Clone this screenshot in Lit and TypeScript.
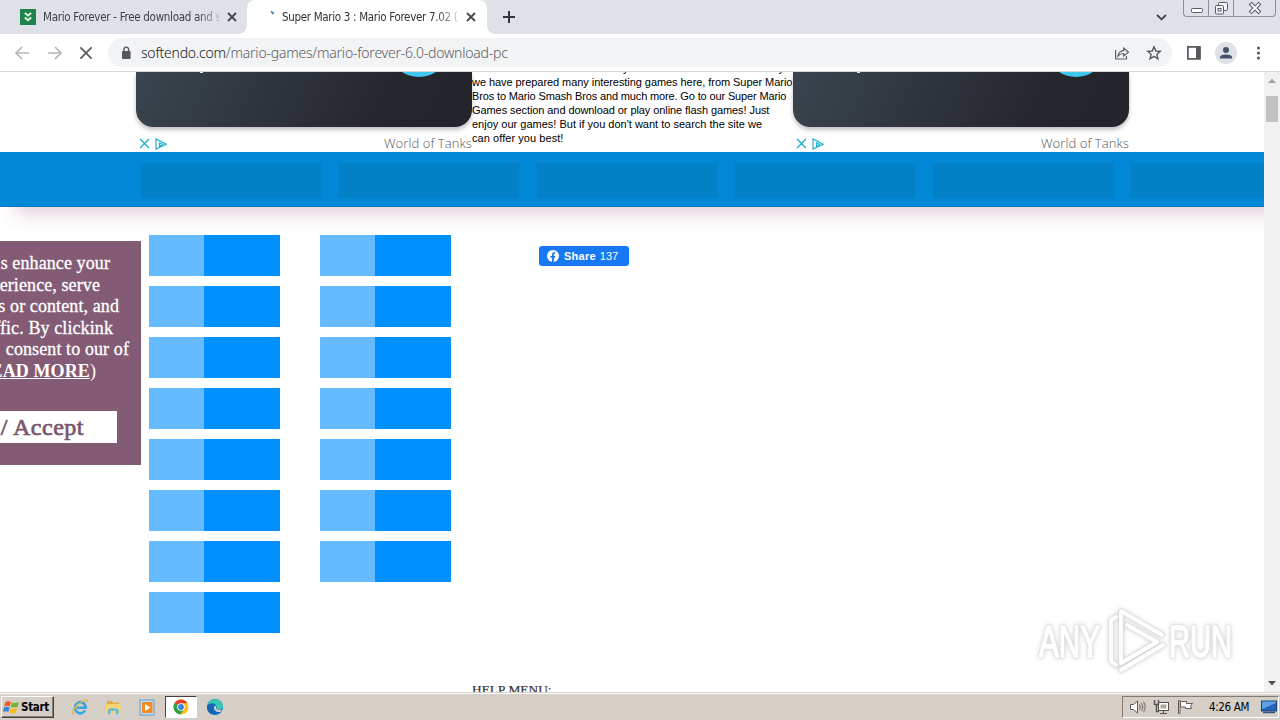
import { LitElement, html, css, svg } from "lit";
import { customElement, property } from "lit/decorators.js";

const closeIcon = (size: number, width: number, color: string) => html`
  <svg width=${size} height=${size} viewBox="0 0 10 10" fill="none" stroke=${color} stroke-width=${width}>
    <path d="M1 1L9 9M9 1L1 9" />
  </svg>`;

@customElement("browser-tabs")
class BrowserTabs extends LitElement {
  static styles = css`
    :host { display: flex; height: 34px; background: #dee1e8; position: relative; font: 11.5px "DejaVu Sans Condensed", "DejaVu Sans", sans-serif; font-stretch: condensed; color: #3c4043; }
    svg { display: block; flex: none; }
    .tab { box-sizing: border-box; height: 34px; display: flex; align-items: center; }
    .first { width: 247px; padding-left: 20px; border-radius: 0 0 8px 0; }
    .active { width: 240px; padding-left: 20px; background: #fff; border-radius: 8px 8px 0 0; position: relative; color: #303236; }
    .active::before, .active::after { content: ""; position: absolute; bottom: 0; width: 8px; height: 8px; }
    .active::before { left: -8px; background: radial-gradient(circle at 0 0, transparent 7.5px, #fff 8px); }
    .active::after { right: -8px; background: radial-gradient(circle at 100% 0, transparent 7.5px, #fff 8px); }
    .title { width: 176px; overflow: hidden; white-space: nowrap; -webkit-mask-image: linear-gradient(90deg, #000 154px, transparent 182px); }
    .t1 { margin-left: 7px; margin-right: 8px; letter-spacing: -0.29px; }
    .t2 { margin-left: 5px; margin-right: 8px; letter-spacing: -0.32px; }
    .plus { margin: 11px 0 0 16px; }
    .chevron { margin: 14px 0 0 auto; }
    .win { display: flex; box-sizing: border-box; width: 93px; height: 17px; margin: 0 4px 0 16px; border: 1px solid #8b9099; border-top: 0; border-radius: 0 0 4px 4px; overflow: hidden; }
    .b { box-sizing: border-box; width: 25px; display: flex; justify-content: center; border-right: 1px solid #8b9099; }
    .c { flex: 1; border: 0; }
  `;
  render() {
    return html`
      <div class="tab first">
        <svg width="16" height="16"><rect width="16" height="16" fill="#1e8449" /><path d="M4.8 4L8 6.6L11.2 4M4.8 8.5L8 11.3L11.2 8.5" fill="none" stroke="#e4f5e9" stroke-width="1.9" /></svg>
        <div class="title t1">Mario Forever - Free download and s</div>
        ${closeIcon(10, 1.8, "#44474b")}
      </div>
      <div class="tab active">
        <svg width="10" height="16"><path d="M4 2.5L6.8 4.8" stroke="#4a7bd0" stroke-width="1.8" /></svg>
        <div class="title t2">Super Mario 3 : Mario Forever 7.02 (</div>
        ${closeIcon(10, 1.8, "#44474b")}
      </div>
      <svg class="plus" width="12" height="12"><path d="M6 0V12M0 6H12" stroke="#33363a" stroke-width="2" /></svg>
      <svg class="chevron" width="11" height="7"><path d="M1 1L5.5 5.3L10 1" fill="none" stroke="#3c4043" stroke-width="1.8" /></svg>
      <div class="win">
        <div class="b"><svg width="25" height="16"><rect x="7.5" y="8.5" width="11" height="4" rx="1" fill="#fff" stroke="#555a63" /></svg></div>
        <div class="b"><svg width="25" height="16" fill="#f4f5f8" stroke="#555a63"><rect x="9.5" y="2.5" width="9" height="8" rx="1" /><rect x="6.5" y="5.5" width="8" height="8.5" rx="1" /><rect x="9" y="8.5" width="3" height="2.5" /></svg></div>
        <div class="b c"><svg width="14" height="16" fill="none"><path d="M3.5 4.5L10.5 11.5M10.5 4.5L3.5 11.5" stroke="#555a63" stroke-width="4" stroke-linecap="square" /><path d="M3.5 4.5L10.5 11.5M10.5 4.5L3.5 11.5" stroke="#fafbfc" stroke-width="2" stroke-linecap="square" /></svg></div>
      </div>`;
  }
}

@customElement("browser-toolbar")
class BrowserToolbar extends LitElement {
  static styles = css`
    :host { display: flex; align-items: center; box-sizing: border-box; height: 38px; padding-left: 14px; background: #fff; border-bottom: 1px solid #d5d6d9; }
    svg { display: block; flex: none; }
    .back { margin-right: 17px; }
    .fwd { margin-right: 16px; }
    .bar { box-sizing: border-box; display: flex; align-items: center; width: 1064px; height: 29px; margin-left: 15px; padding: 0 10px 0 13px; border-radius: 15px; background: #f1f3f4; }
    .url { margin-left: 10px; white-space: nowrap; font: 14px "Noto Sans", sans-serif; font-weight: 300; letter-spacing: -.22px; color: #5c6064; }
    .host { color: #202124; }
    .share { margin-left: auto; }
    .star { margin-left: 16px; }
    .panel { margin-left: 15px; }
    .who { margin-left: 14px; }
    .dots { margin-left: 19px; }
  `;
  render() {
    return html`
      <svg class="back" width="16" height="16" fill="none" stroke="#b4b6b8" stroke-width="1.7"><path d="M15 8H2.5M8 2L2 8L8 14" /></svg>
      <svg class="fwd" width="16" height="16" fill="none" stroke="#b4b6b8" stroke-width="1.7"><path d="M1 8H13.5M8 2L14 8L8 14" /></svg>
      ${closeIcon(14, 1.3, "#5a5d61")}
      <div class="bar">
        <svg width="10" height="14"><rect x="1" y="5" width="8.6" height="8" rx="1" fill="#55585c" /><path d="M3 6V3.4A2.3 2.3 0 0 1 7.6 3.4V6" fill="none" stroke="#55585c" stroke-width="1.4" /></svg>
        <div class="url"><span class="host">softendo.com</span>/mario-games/mario-forever-6.0-download-pc</div>
        <svg class="share" width="16" height="16" fill="none" stroke="#5f6368" stroke-width="1.2"><path d="M1.6 5V14H12.5V11" /><path d="M4 11C4.5 7.5 6.5 5.8 9.7 5.6V3L14.5 7.2L9.7 11V8.5C7.4 8.5 5.6 9.2 4 11Z" /></svg>
        <svg class="star" width="16" height="16" fill="none" stroke="#55595e" stroke-width="1.4"><path d="M8 1.8L9.8 6L14.3 6.4L10.9 9.3L11.9 13.8L8 11.4L4.1 13.8L5.1 9.3L1.7 6.4L6.2 6Z" /></svg>
      </div>
      <svg class="panel" width="14" height="14"><rect x=".9" y=".9" width="12" height="12" fill="none" stroke="#55585c" stroke-width="1.7" /><rect x="9" y="1" width="4.5" height="12" fill="#55585c" /></svg>
      <svg class="who" width="22" height="22"><circle cx="11" cy="11" r="11" fill="#dee1e6" /><circle cx="11" cy="8" r="3" fill="#47536c" /><path d="M5 16.5V15C5 11.6 17 11.6 17 15V16.5Z" fill="#47536c" /></svg>
      <svg class="dots" width="5" height="14" fill="#505357"><circle cx="2.5" cy="2" r="1.5" /><circle cx="2.5" cy="7" r="1.5" /><circle cx="2.5" cy="12" r="1.5" /></svg>`;
  }
}

@customElement("tank-ad")
class TankAd extends LitElement {
  static styles = css`
    :host { display: block; width: 336px; flex: none; }
    .card { height: 55px; border-radius: 0 0 17px 17px; overflow: hidden; background: linear-gradient(115deg, #3a454f 0%, #2f343c 40%, #26272e 72%, #24252c 100%); }
    .wrap { border-radius: 0 0 17px 17px; box-shadow: 0 3px 4px #55405055; }
    .card svg { display: block; }
    .foot { display: flex; align-items: center; height: 25px; padding: 4px 0 0 3px; box-sizing: border-box; margin-top: 2px; }
    .name { margin: -2px 0 0 auto; font: 300 13px "Open Sans", "Noto Sans", sans-serif; letter-spacing: .08px; color: #555; white-space: nowrap; }
    .play { margin-left: 5px; }
  `;
  render() {
    return html`
      <div class="wrap"><div class="card"><svg width="336" height="20"><rect x="64" width="3" height="1" fill="#eee" /><ellipse cx="283" cy="-14" rx="25" ry="19" fill="#3fc8ec" /></svg></div></div>
      <div class="foot">
        ${closeIcon(11, 1.3, "#22b2cc")}
        <svg class="play" width="12" height="12" fill="none" stroke="#22b2cc" stroke-width="1.2"><path d="M1 .9V11.1L11 6.2Z" /><path d="M4.5 5V8.5L7.5 6.4Z" /></svg>
        <span class="name">World of Tanks</span>
      </div>`;
  }
}

const COOKIE_LINES: [string, number][] = [
  ["s enhance your", 110],
  ["erience, serve", 100],
  ["s or content, and", 119],
  ["ffic. By clickink", 113],
  ["consent to our of", 129],
];

@customElement("web-page")
class WebPage extends LitElement {
  static styles = css`
    :host { display: flex; height: 620px; overflow: hidden; position: relative; background: #fff; }
    .main { width: 1264px; height: 620px; overflow: hidden; position: relative; }
    .top { display: flex; height: 80px; padding-left: 136px; overflow: hidden; }
    .intro { width: 321px; flex: none; font: 11px/14px "Liberation Sans", Arial, sans-serif; color: #000; white-space: nowrap; margin-top: -11px; }
    .tail { display: flex; gap: 150px; padding-left: 151px; height: 14px; }
    .l { height: 14px; }
    .l1 { letter-spacing: -.06px; }
    .l2 { letter-spacing: -.14px; }
    .l3 { letter-spacing: -.08px; }
    .l5 { letter-spacing: .06px; }
    .nav { display: flex; gap: 18px; height: 55px; box-sizing: border-box; padding: 11px 0 0 141px; background: #0288d7; border-bottom: 1px solid #0878b9; overflow: hidden; }
    .item { flex: none; width: 180px; height: 35px; background: #0381c7; border-radius: 2px; box-shadow: 0 0 2px #0381c7; }
    .fade { height: 28px; background: linear-gradient(#e8d8e2, #f7f1f5 40%, #fff 85%); -webkit-mask-image: linear-gradient(90deg, transparent 2px, #000 30px); }
    .body { display: flex; padding-left: 149px; height: 445px; }
    .tiles { display: grid; grid-template-rows: repeat(8, 41px); grid-auto-flow: column; grid-auto-columns: 131px; gap: 10px 40px; width: 302px; }
    .tile { background: linear-gradient(90deg, #66baff 55px, #0090ff 55px); }
    .fb { display: flex; align-items: center; box-sizing: border-box; width: 90px; height: 20px; margin: 11px 0 0 88px; padding-left: 8px; border-radius: 3px; background: #1877f2; color: #fff; font: 11px "Liberation Sans", Arial, sans-serif; white-space: nowrap; }
    .fb b { margin: 0 4px 0 5px; letter-spacing: .25px; }
    .help { margin-left: 472px; font: 13.33px/20px "Liberation Serif", "Times New Roman", serif; color: #333; letter-spacing: .05px; -webkit-text-stroke: .2px #333; white-space: nowrap; }
    .cookie { position: absolute; left: 0; top: 169px; width: 141px; height: 224px; overflow: hidden; box-sizing: border-box; padding-top: 12px; background: #835b74; color: #fff; font: 18px/21.6px "Liberation Serif", "Times New Roman", serif; }
    .cl { display: flex; justify-content: flex-end; white-space: nowrap; letter-spacing: .1px; -webkit-text-stroke: .3px #fff; }
    .more { display: flex; justify-content: flex-end; width: 96px; white-space: nowrap; letter-spacing: .1px; }
    .more u { font-weight: 700; }
    .accept { display: flex; justify-content: flex-end; box-sizing: border-box; width: 117px; height: 32px; margin-top: 28px; padding-right: 33px; background: #fff; color: #7a566c; font-size: 24px; line-height: 32px; letter-spacing: .5px; white-space: nowrap; -webkit-text-stroke: .7px #7a566c; }
    .scroll { width: 16px; height: 620px; background: #f1f1f1; display: flex; flex-direction: column; align-items: center; }
    .thumb { width: 12px; height: 26px; margin-top: 7px; background: #c1c1c1; }
    .down { margin-top: auto; }
    .scroll svg { display: block; }
    .mark { position: absolute; left: 1030px; top: 527px; filter: drop-shadow(0 0 2px #00000030); }
    .letters { font: 44px "Liberation Sans Narrow", "Liberation Sans", sans-serif; }
  `;
  render() {
    return html`
      <div class="main">
        <div class="top">
          <tank-ad></tank-ad>
          <div class="intro">
            <div class="tail"><span>y</span><span>y</span></div>
            <div class="l l1">we have prepared many interesting games here, from Super Mario</div>
            <div class="l l2">Bros to Mario Smash Bros and much more. Go to our Super Mario</div>
            <div class="l l3">Games section and download or play online flash games! Just</div>
            <div class="l">enjoy our games! But if you don't want to search the site we</div>
            <div class="l l5">can offer you best!</div>
          </div>
          <tank-ad></tank-ad>
        </div>
        <div class="nav">${Array.from({ length: 6 }, () => html`<div class="item"></div>`)}</div>
        <div class="fade"></div>
        <div class="body">
          <div class="tiles">${Array.from({ length: 15 }, () => html`<div class="tile"></div>`)}</div>
          <div class="fb">
            <svg width="12" height="12"><circle cx="6" cy="6" r="6" fill="#fff" /><path d="M5 12V7.7H3.5V6H5V4.8C5 3.1 6 2.3 7.3 2.3H8.3V3.8H7.6C7 3.8 6.8 4.2 6.8 4.8V6H8.3L8 7.7H6.8V12Z" fill="#1877f2" /></svg>
            <b>Share</b><span>137</span>
          </div>
        </div>
        <div class="help">HELP MENU:</div>
      </div>
      <div class="scroll">
        <svg width="16" height="17"><path d="M4 11L8 6.5L12 11Z" fill="#a3a3a3" /></svg>
        <div class="thumb"></div>
        <svg class="down" width="16" height="17"><path d="M4 6L8 10.5L12 6Z" fill="#505050" /></svg>
      </div>
      <div class="cookie">
        ${COOKIE_LINES.map(([t, end]) => html`<div class="cl" style="width:${end}px">${t}</div>`)}
        <div class="more"><u>EAD MORE</u><span>)</span></div>
        <div class="accept">/ Accept</div>
      </div>
      <svg class="mark" width="210" height="84" fill="none">
        <g class="letters" stroke-linejoin="round">
          <g stroke="#e3e3e3" stroke-width="3">
            <text x="9" y="58" textLength="61" lengthAdjust="spacingAndGlyphs">ANY</text>
            <text x="139" y="58" textLength="63" lengthAdjust="spacingAndGlyphs">RUN</text>
          </g>
          <g fill="#fff" stroke="#fff" stroke-width="1.4">
            <text x="9" y="58" textLength="61" lengthAdjust="spacingAndGlyphs">ANY</text>
            <text x="139" y="58" textLength="63" lengthAdjust="spacingAndGlyphs">RUN</text>
          </g>
        </g>
        <g stroke-linejoin="round" stroke-linecap="round">
          ${[["#dcdcdc", 5.4], ["#fff", 3.8]].map(([c, w]) => svg`
            <g stroke=${c} stroke-width=${w}>
              <path d="M86 18L81 21V62L86 66" />
              <path d="M91 64V12L132 36" />
              <path d="M97 26L127 43L91 64" />
              <path d="M91 71L133 46" />
            </g>`)}
        </g>
      </svg>`;
  }
}

@customElement("task-bar")
class TaskBar extends LitElement {
  @property() time = "4:26 AM";
  static styles = css`
    :host { display: flex; align-items: center; box-sizing: border-box; height: 28px; padding: 1px 1px 0 1px; background: #d6cfc7; border-top: 1px solid #d6cfc7; box-shadow: inset 0 1px #fff; font-family: "DejaVu Sans Condensed", "DejaVu Sans", sans-serif; font-stretch: condensed; }
    svg { display: block; flex: none; }
    .start { display: flex; align-items: center; gap: 1px; box-sizing: border-box; width: 53px; height: 22px; padding-left: 1px; border: 1px solid; border-color: #fff #404040 #404040 #fff; box-shadow: inset -1px -1px #858078; font-size: 11.5px; font-weight: 700; letter-spacing: -.3px; color: #000; }
    .ie { margin-left: 17px; }
    .dir { margin-left: 16px; }
    .wmp { margin-left: 17px; }
    .chrome { box-sizing: border-box; display: flex; align-items: center; justify-content: center; width: 32px; height: 22px; margin: 0 9px 0 10px; background: #fff; border: 1px solid; border-color: #404040 #fff #fff #404040; }
    .tray { box-sizing: border-box; display: flex; align-items: center; width: 157px; height: 22px; margin-left: auto; padding-left: 6px; border: 1px solid; border-color: #817b74 #fff #fff #817b74; font-size: 11.5px; color: #000; white-space: nowrap; }
    .net { margin-left: 7px; }
    .flag { margin-left: 7px; }
    .clock { margin-left: 15px; letter-spacing: -.35px; width: 44px; }
    .desk { margin-left: auto; margin-right: 1px; }
  `;
  render() {
    return html`
      <div class="start">
        <svg width="17" height="16"><path d="M2.5 3C4.5 1.8 6 2 8 3L6.8 7.5C5 6.6 3.3 6.6 1.2 7.5Z" fill="#ef5a24" /><path d="M9 3.3C11 4.4 13.5 4.4 16 3L14.6 7.8C12.5 9 10 8.6 7.8 7.8Z" fill="#72b52d" /><path d="M1 8.5C3 7.5 5 7.7 6.6 8.5L5.3 13C3.5 12 2 12 0 13Z" fill="#3386d7" /><path d="M7.5 9C9.5 10 12 10 14.3 9L13 13.8C11 15 8 14.5 6.2 13.5Z" fill="#f7bd22" /></svg>
        <span>Start</span>
      </div>
      <svg class="ie" width="18" height="18" fill="none"><path d="M14 12.5C12.5 15.5 8.5 16.3 5.8 14C2.8 11.2 3.5 6.7 6.8 4.8C10.5 2.9 14.5 5.3 14.6 9.7H6" stroke="#35a6df" stroke-width="2.6" /><path d="M3 16.5C-.5 15.5 3 9.5 8 5.5C12.5 2 17 .5 16.7 4" stroke="#e2b640" stroke-width="1.3" /></svg>
      <svg class="dir" width="17" height="18"><path d="M2 3H7L8 4.5H14V14H2Z" fill="#dcae45" /><path d="M1 6H15.5V15H1Z" fill="#f3d671" /><path d="M3 16V12C3 9.5 13.5 9.5 13.5 12V16H11V13H5.5V16Z" fill="#69b9df" /></svg>
      <svg class="wmp" width="16" height="17"><rect x="1" y="1" width="14" height="15" fill="#c3dcf2" stroke="#5e9ecf" /><rect x="3" y="3" width="10.5" height="11" rx="1" fill="#f58a1d" /><path d="M6 5L11.5 8.5L6 12Z" fill="#fff" /></svg>
      <div class="chrome">
        <svg width="16" height="16"><circle cx="8" cy="8" r="7.5" fill="#fbc116" /><path d="M8 8L1.5 4.2A7.5 7.5 0 0 1 14.5 4.3H8Z" fill="#e53e30" /><path d="M8 8L1.5 4.2A7.5 7.5 0 0 0 7.5 15.5L11.2 9.8Z" fill="#2ba24c" /><circle cx="8" cy="8" r="3.8" fill="#fff" /><circle cx="8" cy="8" r="2.9" fill="#3c7fe8" /></svg>
      </div>
      <svg width="18" height="18"><circle cx="9" cy="9" r="8" fill="#1674c9" /><path d="M1.3 7C3 0 14.5-1 16.8 7C17.6 11 14 12.5 10.5 11C12 8 9 4.8 5.5 5.2C3.5 5.4 2 6 1.3 7Z" fill="#38c9b0" /><path d="M1 9C2 5.5 7 5 9 7C6 8.5 7 14 14 13.8C9 18.5 1 17 1 9Z" fill="#1565b8" /><path d="M10.5 8C9 11 11 12.5 16 11.5L14.2 14C9 14.5 7 11 8.6 8Z" fill="#d6cfc7" /></svg>
      <div class="tray">
        <svg width="17" height="16" fill="#fff" stroke="#5d5a57"><path d="M1.5 5.5H4.5L8.5 2V14L4.5 10.5H1.5Z" /><path d="M10.5 5.5Q12 8 10.5 10.5M12.6 4Q15 8 12.6 12M14.5 2.8Q17.8 8 14.5 13.2" fill="none" stroke-width=".9" /></svg>
        <svg class="net" width="17" height="16" fill="#fff" stroke="#54514e"><rect x="5.5" y="3.5" width="10" height="8" /><rect x="7.5" y="5.5" width="6" height="4" fill="#aaa59f" stroke="none" /><path d="M7 14.5H14M10.5 12V14" /><path d="M1.5 1V5.5H5.5V1M3.5 6V12.5H6" fill="none" stroke-width="1.4" /></svg>
        <svg class="flag" width="17" height="16" fill="#fff" stroke="#5d5a57"><path d="M1.5 1.5H3V14.5H1.5Z" /><path d="M3.5 2.5H9.5V4.5H15.5L13.5 7L14.5 9.5H8.5V8H3.5Z" /></svg>
        <span class="clock">${this.time}</span>
        <svg class="desk" width="16" height="14"><rect x=".5" y="1" width="15" height="10" fill="#2467bb" stroke="#1a3c78" /><path d="M1 9L15 3V1.5H1Z" fill="#5fa1e4" /><path d="M2 12.5H14" stroke="#34527f" stroke-width="1.5" /></svg>
      </div>`;
  }
}

@customElement("app-root")
class AppRoot extends LitElement {
  static styles = css`
    :host { display: flex; flex-direction: column; width: 1280px; height: 720px; overflow: hidden; }
  `;
  render() {
    return html`<browser-tabs></browser-tabs><browser-toolbar></browser-toolbar><web-page></web-page><task-bar></task-bar>`;
  }
}
